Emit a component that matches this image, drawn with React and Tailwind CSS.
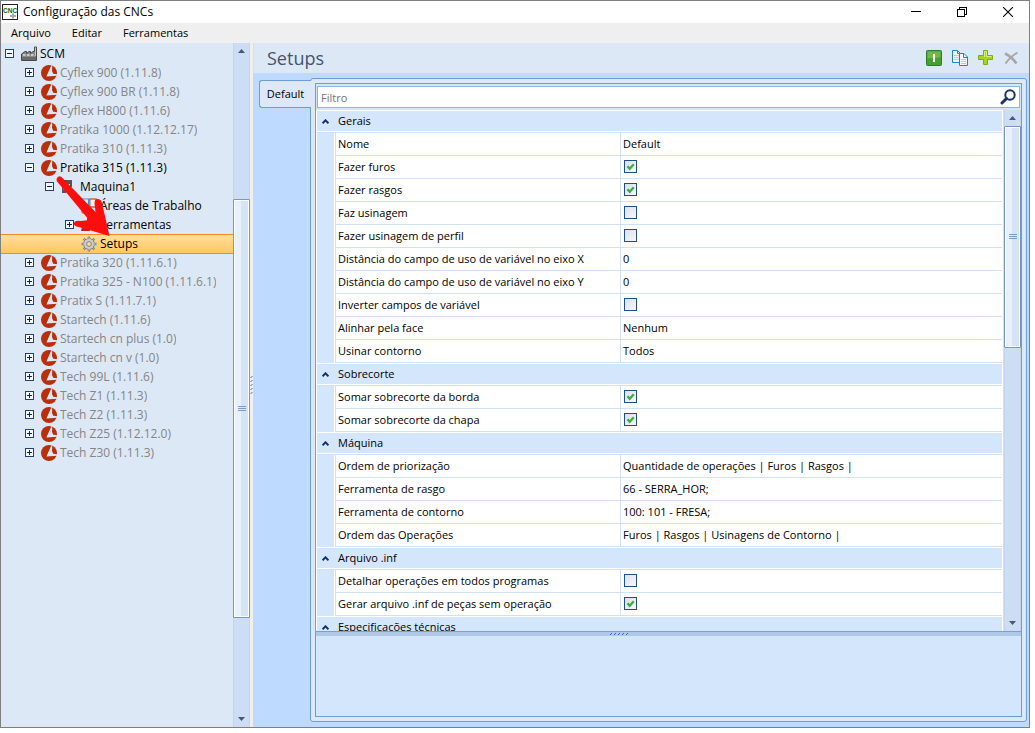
import { useState } from "react";

const tree = [
  { level: 0, toggle: "minus", icon: "factory", label: "SCM" },
  { level: 1, toggle: "plus", icon: "brand", label: "Cyflex 900 (1.11.8)", muted: true },
  { level: 1, toggle: "plus", icon: "brand", label: "Cyflex 900 BR (1.11.8)", muted: true },
  { level: 1, toggle: "plus", icon: "brand", label: "Cyflex H800 (1.11.6)", muted: true },
  { level: 1, toggle: "plus", icon: "brand", label: "Pratika 1000 (1.12.12.17)", muted: true },
  { level: 1, toggle: "plus", icon: "brand", label: "Pratika 310 (1.11.3)", muted: true },
  { level: 1, toggle: "minus", icon: "brand", label: "Pratika 315 (1.11.3)" },
  { level: 2, toggle: "minus", icon: "machine", label: "Maquina1" },
  { level: 3, icon: "areas", label: "Áreas de Trabalho" },
  { level: 3, toggle: "plus", icon: "tools", label: "Ferramentas" },
  { level: 3, icon: "gear", label: "Setups", selected: true },
  { level: 1, toggle: "plus", icon: "brand", label: "Pratika 320 (1.11.6.1)", muted: true },
  { level: 1, toggle: "plus", icon: "brand", label: "Pratika 325 - N100 (1.11.6.1)", muted: true },
  { level: 1, toggle: "plus", icon: "brand", label: "Pratix S (1.11.7.1)", muted: true },
  { level: 1, toggle: "plus", icon: "brand", label: "Startech (1.11.6)", muted: true },
  { level: 1, toggle: "plus", icon: "brand", label: "Startech cn plus (1.0)", muted: true },
  { level: 1, toggle: "plus", icon: "brand", label: "Startech cn v (1.0)", muted: true },
  { level: 1, toggle: "plus", icon: "brand", label: "Tech 99L (1.11.6)", muted: true },
  { level: 1, toggle: "plus", icon: "brand", label: "Tech Z1 (1.11.3)", muted: true },
  { level: 1, toggle: "plus", icon: "brand", label: "Tech Z2 (1.11.3)", muted: true },
  { level: 1, toggle: "plus", icon: "brand", label: "Tech Z25 (1.12.12.0)", muted: true },
  { level: 1, toggle: "plus", icon: "brand", label: "Tech Z30 (1.11.3)", muted: true },
];

const groups = [
  {
    title: "Gerais",
    rows: [
      ["Nome", "Default"],
      ["Fazer furos", true],
      ["Fazer rasgos", true],
      ["Faz usinagem", false],
      ["Fazer usinagem de perfil", false],
      ["Distância do campo de uso de variável no eixo X", "0"],
      ["Distância do campo de uso de variável no eixo Y", "0"],
      ["Inverter campos de variável", false],
      ["Alinhar pela face", "Nenhum"],
      ["Usinar contorno", "Todos"],
    ],
  },
  {
    title: "Sobrecorte",
    rows: [
      ["Somar sobrecorte da borda", true],
      ["Somar sobrecorte da chapa", true],
    ],
  },
  {
    title: "Máquina",
    rows: [
      ["Ordem de priorização", "Quantidade de operações | Furos | Rasgos |"],
      ["Ferramenta de rasgo", "66 - SERRA_HOR;"],
      ["Ferramenta de contorno", "100: 101 - FRESA;"],
      ["Ordem das Operações", "Furos | Rasgos | Usinagens de Contorno |"],
    ],
  },
  {
    title: "Arquivo .inf",
    rows: [
      ["Detalhar operações em todos programas", false],
      ["Gerar arquivo .inf de peças sem operação", true],
    ],
  },
  { title: "Especificações técnicas", rows: [] },
];

const indents = ["pl-[3px]", "pl-[23px]", "pl-[43px]", "pl-[63px]"];

function TreeIcon({ name }) {
  if (name === "brand")
    return (
      <svg viewBox="0 0 16 16" className="size-4">
        <circle cx="8" cy="8" r="8" fill="#b92f0c" />
        <path d="M9.8 1.6 L11.2 2 L11 6 L12.2 8.8 L16.5 9.4 V10.6 L5.4 11.6 Z" fill="#dde8f6" />
        <path d="M10.4 -0.5 H11.4 L11 3 H10 Z" fill="#dde8f6" />
      </svg>
    );
  if (name === "factory")
    return (
      <svg viewBox="0 0 16 16" className="size-4">
        <path d="M0.5 14.5 V8 L4 5.5 H5.5 V7.5 L8 5.5 H9.5 V7.5 L12 5.5 H13.5 V1 H15.5 V14.5 Z" fill="#8a8a8a" stroke="#484848" />
        <path d="M2 9 H13" stroke="#e0e0e0" strokeWidth="1.4" strokeDasharray="2.5 1.5" />
        <path d="M1 12.5 H15" stroke="#6a6a6a" strokeWidth="3" />
        <path d="M14.5 1.5 V10" stroke="#c9c9c9" />
      </svg>
    );
  if (name === "machine")
    return (
      <svg viewBox="0 0 16 16" className="size-4">
        <path d="M1 1 H11 V8 H9 V5 H5 V14 H1 Z" fill="#555" />
        <path d="M2 7 H4 M2 10 H4" stroke="#b5b9c0" />
        <path d="M7 9 H10 V12 H7 Z M13 13 H14.5" stroke="#444" fill="none" />
      </svg>
    );
  if (name === "areas")
    return (
      <svg viewBox="0 0 16 16" className="size-4" fill="#edf4fc">
        <path d="M0 1 H7.5 V10 H0" stroke="#3b8ee6" strokeWidth="1.2" />
        <path d="M8.8 1 H15 V9 H8.8 Z" stroke="#c96a32" strokeWidth="1.4" />
        <path d="M1 12 V15 H5 M8 11 V15 H14" stroke="#c96a32" fill="none" />
      </svg>
    );
  if (name === "tools")
    return (
      <svg viewBox="0 0 16 16" className="size-4">
        <path d="M6 1 H11 V6 H9 L10 11 H5 L7 6 H6 Z" fill="#56565c" />
        <path d="M1 10 H9 V14 H0 Z" fill="#b9231d" />
      </svg>
    );
  return (
    <svg viewBox="0 0 16 16" className="size-4" fill="none">
      <path
        d="M8 0.5 V15.5 M0.5 8 H15.5 M2.7 2.7 L13.3 13.3 M13.3 2.7 L2.7 13.3"
        stroke="#858585"
        strokeWidth="2.6"
      />
      <circle cx="8" cy="8" r="5.8" fill="#858585" />
      <path d="M8 1.5 V14.5 M1.5 8 H14.5 M3.4 3.4 L12.6 12.6 M12.6 3.4 L3.4 12.6" stroke="#c4c4c4" />
      <circle cx="8" cy="8" r="4.9" fill="#cdcdcd" />
      <circle cx="8" cy="8" r="2.4" fill="#fbdc98" stroke="#858585" />
    </svg>
  );
}

function Toggle({ kind, label }) {
  return (
    <button type="button" aria-label={label} className="grid size-[11px] place-items-center">
      <svg viewBox="0 0 9 9" className="size-[9px]" shapeRendering="crispEdges">
        <rect x="0.5" y="0.5" width="8" height="8" fill="#f4f8fd" stroke="#263f6e" />
        <path d={kind === "plus" ? "M2 4.5 H7 M4.5 2 V7" : "M2 4.5 H7"} stroke="#10264f" />
      </svg>
    </button>
  );
}

function Caret({ up }) {
  return (
    <svg viewBox="0 0 7 4" className="h-1 w-[7px]" fill="#49577a">
      <path d={up ? "M0 4 L3.5 0 L7 4 Z" : "M0 0 L3.5 4 L7 0 Z"} />
    </svg>
  );
}

function Grip() {
  return (
    <svg viewBox="0 0 8 5" className="h-[5px] w-2" shapeRendering="crispEdges">
      <path d="M0 0.5 H8 M0 2.5 H8 M0 4.5 H8" stroke="#7c9cc9" />
    </svg>
  );
}

function ScrollBar({ children }) {
  return (
    <div className="flex w-[17px] shrink-0 flex-col border-x border-[#c3d5ee] bg-[#cdddf4]">
      <button type="button" aria-label="Rolar para cima" className="grid h-4 shrink-0 place-items-center">
        <Caret up />
      </button>
      <div className="-mx-px flex min-h-0 flex-1 flex-col">{children}</div>
      <button type="button" aria-label="Rolar para baixo" className="grid h-[17px] shrink-0 place-items-center">
        <Caret />
      </button>
    </div>
  );
}

const thumb =
  "grid place-items-center rounded-[1px] border border-[#7896c4] bg-linear-to-r from-[#e8f0fb] from-50% to-[#d5e3f5] to-50% shadow-[inset_0_0_0_1px_white]";

function Check({ id, initial }) {
  const [on, setOn] = useState(initial);
  return (
    <span className="grid size-[13px]">
      <input
        id={id}
        type="checkbox"
        checked={on}
        onChange={() => setOn(!on)}
        className="col-start-1 row-start-1 size-[13px] appearance-none border border-[#1d5088] bg-linear-to-br from-[#dcdfe9] to-[#f7f8fb]"
      />
      {on && (
        <svg viewBox="0 0 13 13" className="pointer-events-none col-start-1 row-start-1 size-[13px]" fill="none">
          <path d="M3.5 6.3 L5.7 8.8 L9.8 4.3" stroke="#3eae44" strokeWidth="2.4" />
        </svg>
      )}
    </span>
  );
}

function Toolbar() {
  return (
    <div className="flex items-center gap-[10px] pr-[9px]">
      <button type="button" aria-label="Ativar">
        <svg viewBox="0 0 16 16" className="size-4">
          <rect x="0.5" y="0.5" width="15" height="15" rx="1" fill="#46a02c" stroke="#2c7d33" />
          <path d="M1.5 8 V1.5 H14.5 V7 Q8 9 1.5 8" fill="#6fb84a" />
          <rect x="7" y="4" width="2" height="8" fill="#fff" />
        </svg>
      </button>
      <button type="button" aria-label="Copiar">
        <svg viewBox="0 0 16 16" className="size-4" stroke="#1a87ba">
          <path d="M0.5 0.5 H5.5 L8.5 3.5 V12.5 H0.5 Z" fill="#f2f9fd" />
          <path d="M5.5 0.5 V3.5 H8.5" fill="none" />
          <path d="M2 5.5 H7 M2 7.5 H7 M2 9.5 H7" stroke="#a9d3ea" />
          <path d="M7.5 3.5 H12 L15.5 7 V15.5 H7.5 Z" fill="#f2f9fd" />
          <path d="M11.5 3.5 V7.5 H15.5" fill="none" />
          <path d="M9 9.5 H14 M9 11.5 H14 M9 13.5 H14" stroke="#a9d3ea" />
        </svg>
      </button>
      <button type="button" aria-label="Adicionar">
        <svg viewBox="0 0 16 16" className="size-4">
          <path d="M5.5 0.5 H9.5 V5.5 H14.5 V9.5 H9.5 V14.5 H5.5 V9.5 H0.5 V5.5 H5.5 Z" fill="#a6d716" stroke="#78ae14" />
          <path d="M6.5 7 V1.5 H8.5 V6.5 H13.5" fill="none" stroke="#d8f07f" />
        </svg>
      </button>
      <button type="button" aria-label="Excluir" disabled>
        <svg viewBox="0 0 16 16" className="size-4" fill="none" stroke="#a7a7a9">
          <path d="M1 3.5 Q8 7 12.5 13.5" strokeWidth="2.6" />
          <path d="M13.5 2.5 Q6 7 1.5 13.5" strokeWidth="2" />
        </svg>
      </button>
    </div>
  );
}

export default function App() {
  return (
    <div className="flex h-screen bg-white pr-[5px] pb-[5px] font-['Open_Sans','Noto_Sans',sans-serif] text-xs text-black">
      <div className="relative flex min-w-0 flex-1 flex-col border border-[#7f7f7f]">
        <header className="flex h-[22px] shrink-0 items-center bg-white pl-px">
          <span className="grid size-4 shrink-0 place-items-center border border-[#222] bg-white">
            <svg viewBox="0 0 14 14" className="size-[14px]">
              <text x="0" y="8" fontFamily="Liberation Sans" fontSize="6.5" fontWeight="bold" fill="#0c6420">CNC</text>
              <path d="M7 11 H13 M10 8.5 V13.5" stroke="#aaa" strokeWidth="2" />
            </svg>
          </span>
          <h1 className="flex-1 pl-[5px]">Configuração das CNCs</h1>
          <div className="flex items-center gap-1">
            <button type="button" aria-label="Minimizar" className="grid h-5 w-[42px] place-items-center">
              <svg viewBox="0 0 10 10" className="size-[10px]" shapeRendering="crispEdges"><path d="M0 4.5 H10" stroke="#000" /></svg>
            </button>
            <button type="button" aria-label="Restaurar" className="grid h-5 w-[42px] place-items-center">
              <svg viewBox="0 0 10 10" className="size-[10px]" fill="none" stroke="#000" shapeRendering="crispEdges">
                <path d="M0.5 2.5 H7.5 V9.5 H0.5 Z M2.5 2.5 V0.5 H9.5 V7.5 H7.5" />
              </svg>
            </button>
            <button type="button" aria-label="Fechar" className="grid h-5 w-[42px] place-items-center">
              <svg viewBox="0 0 10 10" className="size-[10px]"><path d="M0 0 L10 10 M10 0 L0 10" stroke="#000" strokeWidth="1.1" /></svg>
            </button>
          </div>
        </header>

        <nav className="flex h-5 shrink-0 items-center gap-[21px] bg-[#efefef] pl-[10px] text-[11px]">
          <button type="button">Arquivo</button>
          <button type="button">Editar</button>
          <button type="button">Ferramentas</button>
        </nav>

        <div className="flex min-h-0 flex-1">
          <aside className="flex w-[249px] shrink-0 bg-[#dde8f6]">
            <ul className="min-w-0 flex-1 overflow-hidden pt-px">
              {tree.map((n) => (
                <li
                  key={n.label}
                  className={`flex h-[19px] items-center ${indents[n.level]} ${
                    n.selected
                      ? "bg-linear-to-b from-[#ffe0a0] to-[#fdc75f] shadow-[inset_0_1px_0_#f08a24,0_1px_0_#f08a24]"
                      : ""
                  }`}
                >
                  <span className="w-[17px] shrink-0">{n.toggle && <Toggle kind={n.toggle} label={n.label} />}</span>
                  <span className="w-[19px] shrink-0"><TreeIcon name={n.icon} /></span>
                  <span className={`truncate ${n.muted ? "text-[#858585]" : "text-black"}`}>{n.label}</span>
                </li>
              ))}
            </ul>
            <ScrollBar>
              <div className="flex-[140_1_0%]" />
              <div className={`flex-[419_1_0%] ${thumb}`}><Grip /></div>
              <div className="flex-[92_1_0%]" />
            </ScrollBar>
          </aside>

          <div className="grid w-[3px] shrink-0 place-items-center bg-[#efefef]">
            <svg viewBox="0 0 3 18" className="h-[18px] w-[3px]">
              <path d="M0.5 2 L2.5 0 M0.5 6 L2.5 4 M0.5 10 L2.5 8 M0.5 14 L2.5 12 M0.5 18 L2.5 16" stroke="#3f79c0" />
            </svg>
          </div>

          <main className="flex min-w-0 flex-1 flex-col bg-[#bedaff]">
            <div className="flex h-[30px] shrink-0 items-center justify-between border-l border-[#cfe0f7] bg-[#dde8f6]">
              <h2 className="pl-[13px] text-lg text-[#44546c]">Setups</h2>
              <Toolbar />
            </div>

            <div className="flex min-h-0 flex-1 pt-[5px] pr-[2px] pb-[5px] pl-[6px]">
              <div role="tablist" className="relative z-10 -mr-px mt-[2px] shrink-0">
                <button
                  type="button"
                  role="tab"
                  aria-selected="true"
                  className="h-7 w-[52px] rounded-l-[3px] border border-r-0 border-[#6f9bd8] bg-[#dde8f6] text-[11px]"
                >
                  Default
                </button>
              </div>

              <section className="flex min-w-0 flex-1 flex-col rounded-[3px] border border-[#6f9bd8] bg-[#dde8f6] p-1">
                <div className="flex min-h-0 flex-1 flex-col border border-[#6f9bd8] bg-[#d4e6fc]">
                  <div className="shrink-0 px-px py-[2px]">
                    <div className="flex h-[22px] items-center border border-[#8fb4e3] bg-white pr-[3px]">
                      <input
                        type="text"
                        aria-label="Filtro"
                        placeholder="Filtro"
                        className="h-5 min-w-0 flex-1 px-[3px] text-[11px] outline-none placeholder:text-[#757575]"
                      />
                      <button type="button" aria-label="Pesquisar">
                        <svg viewBox="0 0 16 16" className="size-4" fill="none" stroke="#1c3461">
                          <circle cx="10" cy="6" r="4.7" strokeWidth="2" />
                          <path d="M6.5 9.5 L2 14" strokeWidth="3" strokeLinecap="round" />
                        </svg>
                      </button>
                    </div>
                  </div>

                  <div className="flex min-h-0 flex-1">
                    <div className="min-w-0 flex-1 overflow-hidden border-r border-[#cfe0f7] bg-white px-px">
                      <table className="w-full table-fixed border-separate border-spacing-0 text-[11px] leading-4">
                        <colgroup>
                          <col className="w-[18px]" />
                          <col className="w-[285px]" />
                          <col />
                        </colgroup>
                        {groups.map((g) => (
                          <tbody key={g.title}>
                            <tr>
                              <th colSpan={3} className="h-[23px] border-b border-[#cfe0f7] p-0 text-left font-normal">
                                <button
                                  type="button"
                                  aria-expanded="true"
                                  className="flex h-[22px] w-full items-center border-y border-white bg-[#d4e6fc] pl-[5px]"
                                >
                                  <svg viewBox="0 0 7 5" className="h-[5px] w-[7px]" fill="none">
                                    <path d="M0.5 4.3 L3.5 1.3 L6.5 4.3" stroke="#12306b" strokeWidth="2" />
                                  </svg>
                                  <span className="pl-[9px]">{g.title}</span>
                                </button>
                              </th>
                            </tr>
                            {g.rows.map(([name, value]) => (
                              <tr key={name}>
                                <td className="h-[23px] border-r border-white bg-[#d4e6fc] p-0" />
                                <td className="h-[23px] truncate border-b border-l border-[#cfe0f7] py-0 pr-0 pl-[2px]">
                                  {typeof value === "boolean" ? <label htmlFor={name}>{name}</label> : name}
                                </td>
                                <td className="h-[23px] truncate border-b border-l border-[#cfe0f7] py-0 pr-0 pl-[2px]">
                                  {typeof value === "boolean" ? (
                                    <span className="flex pb-px pl-px"><Check id={name} initial={value} /></span>
                                  ) : (
                                    value
                                  )}
                                </td>
                              </tr>
                            ))}
                          </tbody>
                        ))}
                      </table>
                    </div>
                    <ScrollBar>
                      <div className={`flex-[220_1_0%] ${thumb}`}><Grip /></div>
                      <div className="flex-[267_1_0%]" />
                    </ScrollBar>
                  </div>

                  <div className="grid h-[5px] shrink-0 place-items-center border-t border-[#7a9fd4] bg-[#b0c8e8] pr-[100px]">
                    <svg viewBox="0 0 18 2" className="h-[2px] w-[18px]">
                      <path d="M0 2 L2 0 M4 2 L6 0 M8 2 L10 0 M12 2 L14 0 M16 2 L18 0" stroke="#2f69b8" />
                    </svg>
                  </div>
                  <div className="h-20 shrink-0" />
                </div>
              </section>
            </div>
          </main>
        </div>

        <svg viewBox="0 0 60 64" className="pointer-events-none absolute top-[174px] left-[54px] h-16 w-[60px]">
          <path
            d="M1.5 4 Q3 0 6.5 2 L40.5 37 L39.5 28 Q39.5 24 42.5 24 Q46 24 47 28 L54.5 61 L24 52 Q18 51 19 48 Q20 45 26 46 L34 45 L2.5 7 Q1.5 6 1.5 4 Z"
            fill="#ff0d0d"
          />
        </svg>
      </div>
    </div>
  );
}
